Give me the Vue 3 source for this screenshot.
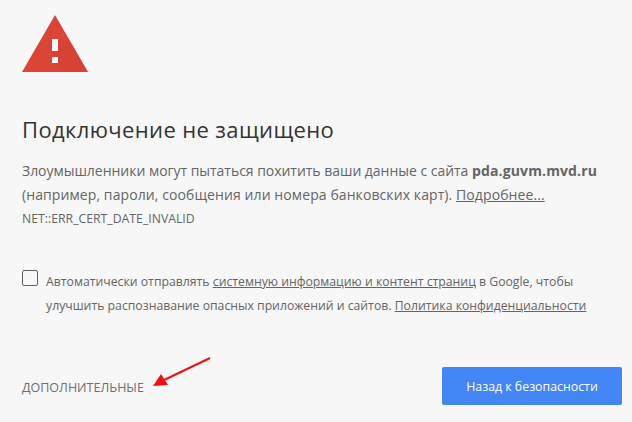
<script setup>
const title = 'Подключение не защищено'
</script>

<template>
  <div class="page">
    <svg class="warn" width="66" height="58" viewBox="0 0 66 58">
      <path d="M33 0 L66 57 L0 57 Z" fill="#db4437" />
      <path d="M36 24 L50 29 L66 57 L47 57 L30 48 Z" fill="#c53929" opacity=".22" />
      <rect x="30" y="24" width="6" height="12" fill="#fff" />
      <rect x="30" y="42" width="6" height="6" fill="#fff" />
    </svg>
    <h1 class="title">{{ title }}</h1>
    <p class="desc">
      <span class="line-one">Злоумышленники могут пытаться похитить ваши данные с сайта</span> <b>pda.guvm.mvd.ru</b><br />
      <span class="line-two">(например, пароли, сообщения или номера банковских карт). <a>Подробнее...</a></span>
    </p>
    <div class="code">NET::ERR_CERT_DATE_INVALID</div>
    <div class="report">
      <span class="box"></span>
      <p class="report-text">
        Автоматически отправлять <a>системную информацию и контент страниц</a> в Google, чтобы<br />
        улучшить распознавание опасных приложений и сайтов. <a>Политика конфиденциальности</a>
      </p>
    </div>
    <div class="actions">
      <span class="more">ДОПОЛНИТЕЛЬНЫЕ</span>
      <button class="back">Назад к безопасности</button>
    </div>
    <svg class="arrow" width="70" height="40" viewBox="0 0 70 40">
      <path d="M60 1 L12 24" stroke="#f01010" stroke-width="2" fill="none" />
      <path d="M3 29 L11 17 L18 28 Z" fill="#f01010" />
    </svg>
  </div>
</template>

<style scoped>
.page {
  position: relative;
  box-sizing: border-box;
  width: 632px;
  height: 422px;
  overflow: hidden;
  padding: 15px 0 0 22px;
  background: #f7f7f7;
  color: #646464;
  font-family: "Open Sans", sans-serif;
}
.warn { display: block; }
.title {
  margin: 41px 0 0;
  font-size: 22px;
  line-height: 30px;
  font-weight: 400;
  color: #333;
  letter-spacing: 0.37px;
}
.desc {
  margin: 15px 0 0;
  font-size: 14px;
  line-height: 24px;
  white-space: nowrap;
}
.desc b { font-weight: 700; letter-spacing: 0.13px; }
.line-one { letter-spacing: -0.03px; }
.line-two { letter-spacing: 0.09px; }
a { text-decoration: underline; }
.code {
  margin-top: 2px;
  font-size: 12.25px;
  line-height: 20px;
}
.report {
  display: flex;
  gap: 8px;
  margin-top: 41px;
}
.box {
  box-sizing: border-box;
  flex: none;
  width: 16px;
  height: 16px;
  margin-top: 0;
  border: 1px solid #5f5f5f;
  border-radius: 2px;
}
.report-text {
  margin: 0;
  font-size: 12.25px;
  line-height: 24px;
  white-space: nowrap;
}
.actions {
  display: flex;
  align-items: center;
  justify-content: space-between;
  width: 600px;
  margin-top: 49px;
}
.more {
  font-size: 12.5px;
  color: #6e6e6e;
  padding-top: 2px;
}
.back {
  width: 180px;
  height: 38px;
  border: 0;
  border-radius: 2px;
  background: #4285f4;
  color: #fff;
  font-family: inherit;
  font-size: 12.35px;
  padding: 0;
}
.arrow {
  position: absolute;
  left: 150px;
  top: 357px;
}
</style>
